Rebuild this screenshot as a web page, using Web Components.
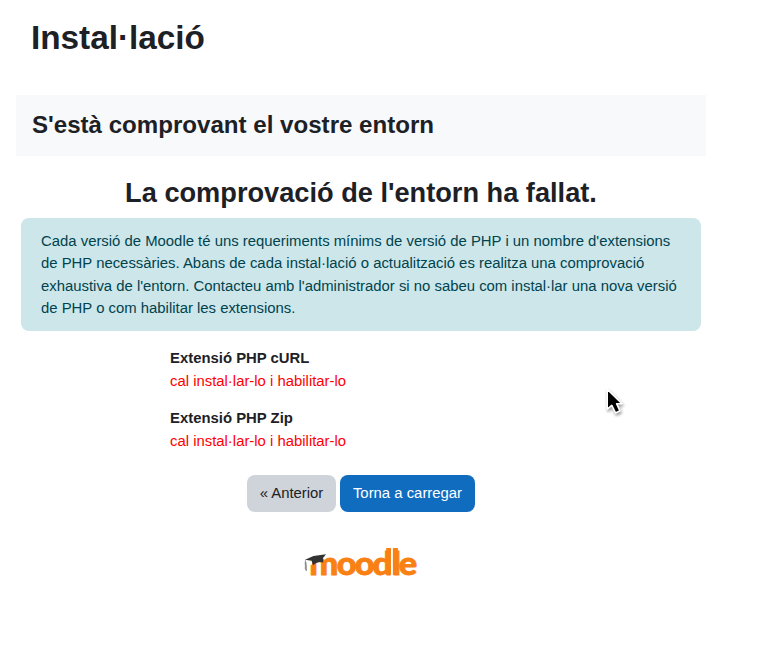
<!DOCTYPE html>
<html lang="ca">
<head>
<meta charset="utf-8">
<title>Instal·lació</title>
<style>
html,body{margin:0;background:#fff}
body{font:14.88px/22.4px "Liberation Sans",Arial,sans-serif;color:#1d2125;overflow:hidden}
</style>
</head>
<body>
<install-page></install-page>
<script>
function define(name, html) {
  customElements.define(name, class extends HTMLElement {
    constructor() {
      super();
      this.attachShadow({mode: 'open'}).innerHTML = html;
    }
  });
}

define('page-title', `<style>
:host{display:block;padding:17px 15px 0 31px;height:78px}
h1{margin:0;font-size:33.3px;line-height:41px;font-weight:700;white-space:nowrap}
</style><h1><slot></slot></h1>`);

define('stage-heading', `<style>
:host{display:block;background:#f8f9fb;padding:15px 16px;height:31px}
h2{margin:0;font-size:24.1px;line-height:30px;font-weight:700;white-space:nowrap}
</style><h2><slot></slot></h2>`);

define('result-heading', `<style>
:host{display:block;margin-top:20px;text-align:center}
h2{margin:0;font-size:27.2px;line-height:34px;font-weight:700;white-space:nowrap}
</style><h2><slot></slot></h2>`);

define('info-box', `<style>
:host{display:block;box-sizing:border-box;margin:8px 5px 0;width:680px;height:113px;padding:12px 20px;color:#00434e;background:#cce6ea;border-radius:8px}
p{margin:0;white-space:nowrap}
</style><p><slot></slot></p>`);

define('env-check', `<style>
:host{display:block;height:60px}
dl,dt,dd{margin:0}
dt{font-weight:700}
dd{color:#f00;padding-top:.8px}
</style><dl><dt><slot name="name"></slot></dt><dd><slot></slot></dd></dl>`);

define('action-button', `<style>
:host{display:block}
button{display:block;box-sizing:border-box;width:100%;height:37px;padding:0;border:0;border-radius:8px;font:inherit;color:#1d2125;background:#ced4da;white-space:nowrap}
:host([primary]) button{color:#fff;background:#0f6cbf}
</style><button type="button"><slot></slot></button>`);

define('moodle-logo', `<style>
:host{display:block;width:114px;height:30px}
svg{display:block;overflow:visible}
</style><svg width="114" height="30" viewBox="0 0 114 30" role="img" aria-label="Moodle">
<text transform="scale(1.06 1)" y="27.8" x="4.9 30.8 47.9 64.7 83.3 89.4" font-family="Lato,sans-serif" font-weight="900" font-size="32.5" fill="#f98012" stroke="#f98012" stroke-width=".8">moodle</text>
<path d="M82.2 1H87V28H82.2ZM88.9 1H93.9V28H88.9Z" fill="#f98012"/>
<path d="M4 14.4 L8 13 L8 17.5 L5.5 18.5Z" fill="#fff"/>
<path d="M1 12.8 L9.5 9 L22 7.3 L19 11 L19.3 15.5 Q14 13.7 9 18.2 L7.6 13.8 Z" fill="#333"/>
<path d="M1.5 13 Q.8 16 1.3 19 L1.2 22 L2.5 24 L2.4 19 L2 15" fill="#888" stroke="#777" stroke-width=".5"/>
</svg>`);

define('mouse-pointer', `<style>
:host{position:absolute;left:602px;top:384px;width:30px;height:36px;pointer-events:none}
svg{display:block;filter:drop-shadow(1px 2px 1.5px #0006)}
</style><svg width="30" height="36" viewBox="0 0 30 36"><path d="M5.2 5.2V25.2L9.8 21.4L13.6 29L18 26.8L14.7 19.8H20Z" fill="#000" stroke="#fff" stroke-width="1.6" stroke-linejoin="round"/></svg>`);

define('install-page', `<style>
:host{display:block;position:relative;width:772px;height:652px}
stage-heading,result-heading,main{width:690px;margin-left:16px}
stage-heading{width:658px}
.checks{display:flex;flex-direction:column;margin:16px 0 0 154px}
.actions{display:flex;justify-content:center;gap:4px;margin-top:8px}
.back{width:89px}.reload{width:135px}
moodle-logo{margin:35px auto 0 288px}
</style>
<page-title>Instal·lació</page-title>
<stage-heading>S'està comprovant el vostre entorn</stage-heading>
<result-heading>La comprovació de l'entorn ha fallat.</result-heading>
<main>
<info-box>Cada versió de Moodle té uns requeriments mínims de versió de PHP i un nombre d'extensions<br>de PHP necessàries. Abans de cada instal·lació o actualització es realitza una comprovació<br>exhaustiva de l'entorn. Contacteu amb l'administrador si no sabeu com instal·lar una nova versió<br>de PHP o com habilitar les extensions.</info-box>
<div class="checks">
<env-check><span slot="name">Extensió PHP cURL</span>cal instal·lar-lo i habilitar-lo</env-check>
<env-check><span slot="name">Extensió PHP Zip</span>cal instal·lar-lo i habilitar-lo</env-check>
</div>
<div class="actions"><action-button class="back">« Anterior</action-button><action-button class="reload" primary>Torna a carregar</action-button></div>
<moodle-logo></moodle-logo>
</main>
<mouse-pointer></mouse-pointer>`);
</script>
</body>
</html>
